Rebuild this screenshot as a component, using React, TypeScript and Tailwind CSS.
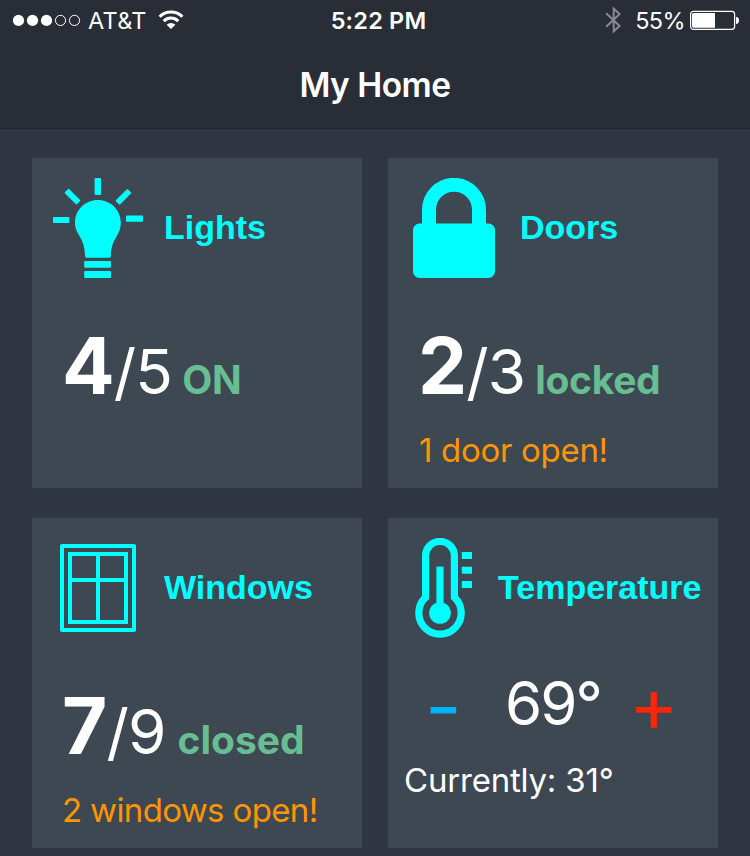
import type { ReactNode } from "react";

function Signal() {
  return (
    <svg width="69" height="14" viewBox="0 0 69 14" className="block">
      <circle cx="5.5" cy="7.4" r="5.6" fill="#fff" />
      <circle cx="19.5" cy="7.4" r="5.6" fill="#fff" />
      <circle cx="33.5" cy="7.4" r="5.6" fill="#fff" />
      <circle cx="47.5" cy="7.4" r="5.1" fill="none" stroke="#fff" />
      <circle cx="61.5" cy="7.4" r="5.1" fill="none" stroke="#fff" />
    </svg>
  );
}

function Wifi() {
  return (
    <svg width="26" height="20" viewBox="0 0 26 20" className="block">
      <g fill="none" stroke="#fff" strokeWidth="3">
        <path d="M1.6 6.7 A16.3 16.3 0 0 1 24.4 6.7" />
        <path d="M5.7 11.1 A10.4 10.4 0 0 1 20.3 11.1" />
      </g>
      <path d="M13 19 L8.6 14.7 A6.3 6.3 0 0 1 17.4 14.7 Z" fill="#fff" />
    </svg>
  );
}

function Bluetooth() {
  return (
    <svg width="17" height="28" viewBox="0 0 17 28" className="block">
      <path d="M1.2 7.2 L14.6 19.9 L8.7 25.3 V2.7 L14.6 8.1 L1.2 20.8" fill="none" stroke="#85878c" strokeWidth="2.1" />
    </svg>
  );
}

function Battery() {
  return (
    <svg width="50" height="20" viewBox="0 0 50 20" className="block">
      <rect x="0.6" y="1.4" width="44" height="18" rx="2.8" fill="none" stroke="#fff" strokeWidth="1.2" />
      <path d="M3.5 3 H25 V17.8 H3.5 Q2 17.8 2 16 V4.6 Q2 3 3.5 3Z" fill="#fff" />
      <path d="M46 6.8 Q49 7.2 49 10.4 Q49 13.6 46 14 Z" fill="#fff" />
    </svg>
  );
}

function Bulb() {
  return (
    <svg width="100" height="100" viewBox="0 0 100 100" fill="#00ffff" className="block">
      <path d="M49.8 22 C62.5 22 72.8 32 72.8 44.6 C72.8 51 70.5 55.3 68 59.5 C64.8 65 62.8 70 62.8 78.3 Q62.8 79.7 61.5 79.7 H38.5 Q37 79.7 37 78.3 C37 70 35 63.5 31.8 58.5 C29 54 27 50.5 27 44.6 C27 32 37.2 22 49.8 22Z" />
      <rect x="36.2" y="83" width="26.8" height="6.7" rx="1.2" />
      <rect x="36.2" y="93" width="26.8" height="7" rx="1.2" />
      <rect x="46.6" y="0" width="6.4" height="17" rx="1.3" />
      <rect x="5" y="39" width="16.3" height="6" rx=".8" />
      <rect x="78" y="37.6" width="17" height="6.2" rx=".8" />
      <rect x="16" y="15.6" width="17" height="6" rx="1" transform="rotate(45 24.5 18.6)" />
      <rect x="67" y="15.8" width="17" height="6" rx="1" transform="rotate(-45 75.5 18.8)" />
    </svg>
  );
}

function Lock() {
  return (
    <svg width="100" height="100" viewBox="0 0 100 100" className="block">
      <path d="M25 50 V32 A25 25.2 0 0 1 75 32 V50" fill="none" stroke="#00ffff" strokeWidth="14" />
      <rect x="9" y="45.5" width="82" height="54.5" rx="6.5" fill="#00ffff" />
    </svg>
  );
}

function WindowIcon() {
  return (
    <svg width="100" height="100" viewBox="0 0 100 100" fill="none" stroke="#00ffff" strokeWidth="4" className="block">
      <rect x="14" y="8" width="72" height="84" strokeLinejoin="round" />
      <rect x="22" y="16" width="56" height="68" />
      <path d="M50 16 V84 M22 42 H78" />
    </svg>
  );
}

function Thermometer() {
  return (
    <svg width="100" height="100" viewBox="0 0 100 100" className="block">
      <path d="M32.6 17.8 A14.4 14.4 0 0 1 61.4 17.8 V59.4 A21.2 21.2 0 1 1 32.6 59.4 Z" fill="none" stroke="#00ffff" strokeWidth="7.2" />
      <path d="M47 28.6 V75" stroke="#00ffff" strokeWidth="7.2" />
      <circle cx="47" cy="75" r="10.8" fill="#00ffff" />
      <path d="M68.8 17.5 H79 M68.8 32.3 H79 M68.8 46.5 H79" stroke="#00ffff" strokeWidth="7" />
    </svg>
  );
}

function Card({ icon, title, shift, children }: { icon: ReactNode; title: string; shift?: boolean; children: ReactNode }) {
  return (
    <section className="h-[330px] w-[330px] bg-[#3d4853] pt-5">
      <div className={shift ? "flex h-[100px] items-center gap-[5px] pl-[5px]" : "flex h-[100px] items-center gap-4 pl-4"}>
        {icon}
        <h2 className="pb-[3px] font-['Liberation_Sans',Arial,sans-serif] text-[34px] leading-[38px] font-bold text-[#00ffff]">{title}</h2>
      </div>
      {children}
    </section>
  );
}

function Count({ value, total, status, warning, tight }: { value: number; total: number; status: string; warning?: string; tight?: boolean }) {
  return (
    <div className="pl-[30px] whitespace-nowrap">
      <div className="mt-[49px] flex h-[78px] items-baseline leading-none">
        <span className="text-[78px] leading-none font-bold tracking-[-1px] text-white">{value}</span>
        <span className="text-[62px] leading-none font-normal tracking-[-0.8px] text-white">/{total}</span>
        <span className={tight ? "ml-3 text-[39px] leading-none font-bold text-[#68bd92]" : "ml-[10px] text-[39px] leading-none font-bold tracking-[-0.3px] text-[#68bd92]"}>
          {status}
        </span>
      </div>
      {warning && (
        <p className={tight ? "mt-[29px] text-[33px] leading-none tracking-[-0.65px] text-[#ff9500]" : "mt-[29px] pl-px text-[33px] leading-none tracking-[-0.3px] text-[#ff9500]"}>
          {warning}
        </p>
      )}
    </div>
  );
}

export default function App() {
  return (
    <div className="h-[856px] w-[750px] overflow-hidden bg-[#2f3541] font-[Inter,sans-serif] text-white">
      <header className="h-[129px] border-b border-[#23262d] bg-[#292d35]">
        <div className="grid h-10 grid-cols-3 items-center pr-[10px] pl-[13px] text-[23.5px] leading-none whitespace-nowrap">
          <div className="flex items-center">
            <Signal />
            <span className="mt-[2px] ml-[6px] tracking-[0.3px]">AT&amp;T</span>
            <span className="ml-[11px]"><Wifi /></span>
          </div>
          <div className="mt-[2px] pl-[4px] text-center font-semibold tracking-[0.2px]">5:22 PM</div>
          <div className="flex items-center justify-end">
            <Bluetooth />
            <span className="mt-[2px] mr-[5px] ml-[13px] tracking-[-0.6px]">55%</span>
            <Battery />
          </div>
        </div>
        <h1 className="mt-[29px] text-center text-[33.5px] leading-none font-semibold tracking-[-0.5px]">My Home</h1>
      </header>
      <main className="mt-[29px] ml-8 grid w-[686px] grid-cols-[330px_330px] gap-x-[26px] gap-y-[30px]">
        <Card icon={<Bulb />} title="Lights">
          <Count value={4} total={5} status="ON" />
        </Card>
        <Card icon={<Lock />} title="Doors">
          <Count value={2} total={3} status="locked" warning="1 door open!" />
        </Card>
        <Card icon={<WindowIcon />} title="Windows">
          <Count value={7} total={9} status="closed" warning="2 windows open!" tight />
        </Card>
        <Card icon={<Thermometer />} title="Temperature" shift>
          <div className="mt-[27px] flex h-[72px] items-start whitespace-nowrap">
            <button className="mt-px ml-[37px] w-[80px] text-left text-[80px] leading-none text-[#00b3ff]">-</button>
            <span className="mt-2 w-[124px] text-[60px] leading-none font-normal tracking-[-2px]">69°</span>
            <button className="mt-px text-[75px] leading-none text-[#ff2600]">+</button>
          </div>
          <p className="mt-[27px] pl-4 text-[33px] leading-none tracking-[-0.2px]">Currently: 31°</p>
        </Card>
      </main>
    </div>
  );
}
